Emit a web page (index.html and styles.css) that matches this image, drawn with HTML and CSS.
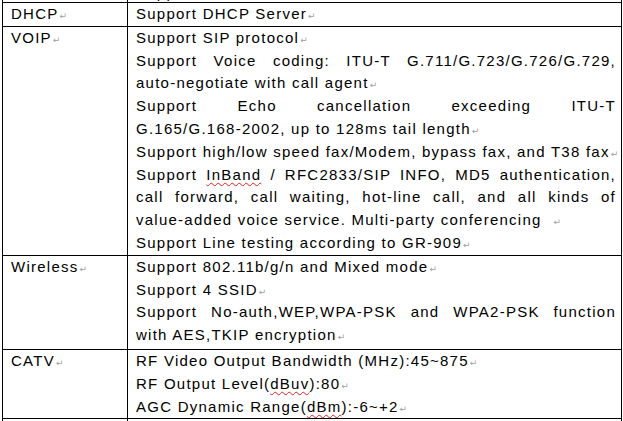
FILE: index.html
```html
<!DOCTYPE html>
<html lang="en">
<head>
    <meta charset="UTF-8">
    <meta name="viewport" content="width=device-width, initial-scale=1.0">
    <title>ONU Specification</title>
    <link rel="stylesheet" href="styles.css">
</head>
<body>
    <table class="spec">
        <colgroup>
            <col class="col-name">
            <col class="col-desc">
        </colgroup>
        <tr class="cut">
            <td></td>
            <td><span class="ln">Support</span></td>
        </tr>
        <tr>
            <td>DHCP<span class="pm">↵</span></td>
            <td>
                <p><span class="ln">Support DHCP Server<span class="pm">↵</span></span></p>
            </td>
        </tr>
        <tr>
            <td>VOIP<span class="pm">↵</span></td>
            <td>
                <p><span class="ln">Support SIP protocol<span class="pm">↵</span></span></p>
                <p>
                    <span class="ln full">Support Voice coding: ITU-T G.711/G.723/G.726/G.729,</span>
                    <span class="ln">auto-negotiate with call agent<span class="pm">↵</span></span>
                </p>
                <p>
                    <span class="ln full">Support Echo cancellation exceeding ITU-T</span>
                    <span class="ln">G.165/G.168-2002, up to 128ms tail length<span class="pm">↵</span></span>
                </p>
                <p><span class="ln">Support high/low speed fax/Modem, bypass fax, and T38 fax<span class="pm">↵</span></span></p>
                <p>
                    <span class="ln full">Support <span class="typo">InBand</span> / RFC2833/SIP INFO, MD5 authentication,</span>
                    <span class="ln full">call forward, call waiting, hot-line call, and all kinds of</span>
                    <span class="ln">value-added voice service. Multi-party conferencing&nbsp; <span class="pm">↵</span></span>
                </p>
                <p><span class="ln">Support Line testing according to GR-909<span class="pm">↵</span></span></p>
            </td>
        </tr>
        <tr class="wifi">
            <td>Wireless<span class="pm">↵</span></td>
            <td>
                <p><span class="ln">Support 802.11b/g/n and Mixed mode<span class="pm">↵</span></span></p>
                <p><span class="ln">Support 4 SSID<span class="pm">↵</span></span></p>
                <p>
                    <span class="ln full">Support No-auth,WEP,WPA-PSK and WPA2-PSK function</span>
                    <span class="ln">with AES,TKIP encryption<span class="pm">↵</span></span>
                </p>
            </td>
        </tr>
        <tr>
            <td>CATV<span class="pm">↵</span></td>
            <td>
                <p><span class="ln">RF Video Output Bandwidth (MHz):45~875<span class="pm">↵</span></span></p>
                <p><span class="ln">RF Output Level(<span class="typo">dBuv</span>):80<span class="pm">↵</span></span></p>
                <p><span class="ln">AGC Dynamic Range(<span class="typo">dBm</span>):-6~+2<span class="pm">↵</span></span></p>
            </td>
        </tr>
        <tr class="next">
            <td></td>
            <td></td>
        </tr>
    </table>
</body>
</html>
```

FILE: styles.css
```css
* {
    margin: 0;
    padding: 0;
    box-sizing: border-box;
}

html,
body {
    overflow: hidden;
    background: #fff;
}

body {
    font-family: 'Liberation Sans', Arial, sans-serif;
    font-size: 15px;
    color: #000;
}

.spec {
    border-collapse: collapse;
    table-layout: fixed;
    width: 619px;
    margin: -17px 0 0 2px;
    letter-spacing: 1.25px;
}

.col-name {
    width: 125px;
}

.col-desc {
    width: 494px;
}

.spec td {
    border: 1px solid #000;
    vertical-align: top;
    padding: 0 5px 0 8px;
    line-height: 22.8px;
}

.cut td {
    line-height: 18px;
}

.wifi td {
    padding-bottom: 2px;
}

.next td {
    height: 23px;
}

.spec p {
    text-align: justify;
}

.ln {
    display: block;
    white-space: nowrap;
}

.ln.full {
    white-space: normal;
    text-align-last: justify;
}

/* word's paragraph mark */
.pm {
    font-family: 'DejaVu Sans', sans-serif;
    font-size: 9px;
    line-height: 1;
    color: #a0a0a0;
    letter-spacing: 0;
    margin-left: 1px;
}

.typo {
    text-decoration: underline wavy #e02020;
    text-decoration-thickness: 1px;
    text-underline-offset: 2px;
}
```
